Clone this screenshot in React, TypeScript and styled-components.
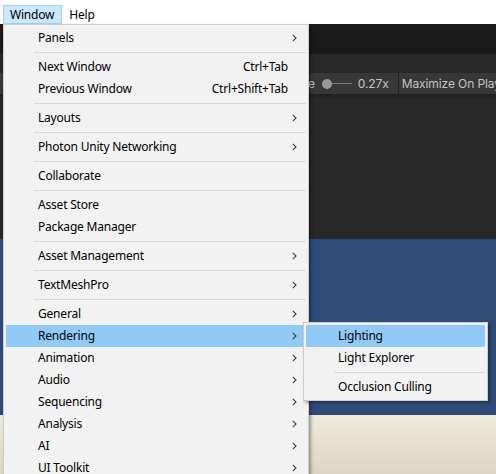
import styled, { createGlobalStyle } from "styled-components";

const GlobalStyle = createGlobalStyle`
    html, body {
        margin: 0;
        padding: 0;
        overflow: hidden;
        background: #ffffff;
    }
`

type Entry =
    | { kind: "item"; label: string; shortcut?: string; sub?: boolean; active?: boolean }
    | { kind: "sep" }

const sep: Entry = { kind: "sep" }
const item = (label: string, opts: { shortcut?: string; sub?: boolean; active?: boolean } = {}): Entry =>
    ({ kind: "item", label, ...opts })

const windowMenu: Entry[] = [
    item("Panels", { sub: true }),
    sep,
    item("Next Window", { shortcut: "Ctrl+Tab" }),
    item("Previous Window", { shortcut: "Ctrl+Shift+Tab" }),
    sep,
    item("Layouts", { sub: true }),
    sep,
    item("Photon Unity Networking", { sub: true }),
    sep,
    item("Collaborate"),
    sep,
    item("Asset Store"),
    item("Package Manager"),
    sep,
    item("Asset Management", { sub: true }),
    sep,
    item("TextMeshPro", { sub: true }),
    sep,
    item("General", { sub: true }),
    item("Rendering", { sub: true, active: true }),
    item("Animation", { sub: true }),
    item("Audio", { sub: true }),
    item("Sequencing", { sub: true }),
    item("Analysis", { sub: true }),
    item("AI", { sub: true }),
    item("UI Toolkit", { sub: true }),
]

const renderingMenu: Entry[] = [
    item("Lighting", { active: true }),
    item("Light Explorer"),
    sep,
    item("Occlusion Culling"),
]

function Chevron() {
    return (
        <svg width="5" height="8" viewBox="0 0 5 8">
            <path d="M0.8 0.8 L4 4 L0.8 7.2" fill="none" stroke="#3b3b3b" strokeWidth="1.1" />
        </svg>
    )
}

function MenuList({ entries }: { entries: Entry[] }) {
    return (
        <>
            {entries.map((e, i) =>
                e.kind === "sep" ? (
                    <Separator key={i} />
                ) : (
                    <MenuItem key={i} $active={e.active}>
                        <ItemLabel>{e.label}</ItemLabel>
                        {e.shortcut && <Shortcut>{e.shortcut}</Shortcut>}
                        <ArrowSlot>{e.sub && <Chevron />}</ArrowSlot>
                    </MenuItem>
                )
            )}
        </>
    )
}

function App() {
    return (
        <>
            <GlobalStyle />
            <Screen>
                <MenuBar>
                    <MenuTitle $open>Window</MenuTitle>
                    <MenuTitle>Help</MenuTitle>
                </MenuBar>

                <Editor>
                    <TitleStrip />
                    <TabStrip />
                    <Toolbar>
                        <ToolLabel>Scale</ToolLabel>
                        <Slider>
                            <Knob />
                            <Track />
                        </Slider>
                        <ToolLabel>0.27x</ToolLabel>
                        <ToolDivider />
                        <ToolLabel $tight>Maximize On Play</ToolLabel>
                    </Toolbar>
                    <SceneView />
                    <GameView />
                    <Ground />
                </Editor>

                <Dropdown>
                    <MenuList entries={windowMenu} />
                </Dropdown>

                <SubMenu>
                    <MenuList entries={renderingMenu} />
                </SubMenu>
            </Screen>
        </>
    )
}

const Screen = styled.div`
    position: relative;
    width: 496px;
    height: 474px;
    overflow: hidden;
    display: flex;
    flex-direction: column;
    font-family: "Noto Sans", "Segoe UI", sans-serif;
`

const MenuBar = styled.div`
    height: 24px;
    background: #ffffff;
    display: flex;
    align-items: flex-start;
    padding: 5px 0 0 3px;
    box-sizing: border-box;
`

const MenuTitle = styled.div<{ $open?: boolean }>`
    height: 19px;
    box-sizing: border-box;
    padding: 0 7px 1px 6px;
    display: flex;
    align-items: center;
    font-size: 12px;
    letter-spacing: -0.2px;
    color: #000;
    border: 1px solid ${p => p.$open ? "#99d1ff" : "transparent"};
    background: ${p => p.$open ? "#cce8ff" : "transparent"};
`

const Editor = styled.div`
    flex: 1;
    display: flex;
    flex-direction: column;
    background: #1b1b1b;
`

const TitleStrip = styled.div`
    height: 30px;
    background: #1a1a1a;
`

const TabStrip = styled.div`
    height: 19px;
    background: #282828;
`

const Toolbar = styled.div`
    height: 21px;
    background: #383838;
    display: flex;
    align-items: center;
    padding-left: 280px;
    white-space: nowrap;
    overflow: hidden;
    font-family: Inter, "Noto Sans", sans-serif;
    font-size: 12px;
    letter-spacing: -0.1px;
    color: #c4c4c4;
`

const ToolLabel = styled.span<{ $tight?: boolean }>`
    flex: none;
    padding: 0 4px 0 ${p => p.$tight ? 3 : 4}px;
`

const Slider = styled.div`
    flex: none;
    display: flex;
    align-items: center;
    width: 30px;
    margin: 0 2px 0 3px;
`

const Knob = styled.div`
    width: 10px;
    height: 10px;
    border-radius: 50%;
    background: #999999;
`

const Track = styled.div`
    flex: 1;
    height: 1px;
    background: #7a7a7a;
`

const ToolDivider = styled.div`
    flex: none;
    width: 1px;
    align-self: stretch;
    background: #232323;
    margin: 0 0 0 5px;
`

const SceneView = styled.div`
    height: 145px;
    background: linear-gradient(to bottom, #1f1f1f 0px, #282828 5px);
`

const GameView = styled.div`
    height: 176px;
    background: #2f4c78;
`

const Ground = styled.div`
    flex: 1;
    background: linear-gradient(to bottom, #efe9dc, #dcd5c5);
`

const MenuPanel = styled.div`
    position: absolute;
    box-sizing: border-box;
    background: #f2f2f2;
    border: 1px solid #cccccc;
    padding: 2px;
    box-shadow: 2px 2px 3px rgba(0, 0, 0, 0.35);
`

const Dropdown = styled(MenuPanel)`
    left: 3px;
    top: 24px;
    width: 306px;
    height: 470px;
`

const SubMenu = styled(MenuPanel)`
    left: 303px;
    top: 322px;
    width: 185px;
`

const MenuItem = styled.div<{ $active?: boolean }>`
    height: 22px;
    box-sizing: border-box;
    display: flex;
    align-items: center;
    padding: 0 9px 2px 32px;
    font-size: 12px;
    letter-spacing: -0.2px;
    color: #000;
    white-space: nowrap;
    background: ${p => p.$active ? "#91c9f7" : "transparent"};
`

const ItemLabel = styled.span`
    flex: 1;
`

const Shortcut = styled.span`
    flex: none;
`

const ArrowSlot = styled.span`
    flex: none;
    width: 9px;
    height: 8px;
    margin-top: 2px;
    display: flex;
    justify-content: flex-end;
    align-items: center;
`

const Separator = styled.div`
    height: 7px;
    display: flex;
    align-items: center;
    padding-left: 28px;

    &::after {
        content: "";
        flex: 1;
        height: 1px;
        background: #d7d7d7;
    }
`

export default App;
